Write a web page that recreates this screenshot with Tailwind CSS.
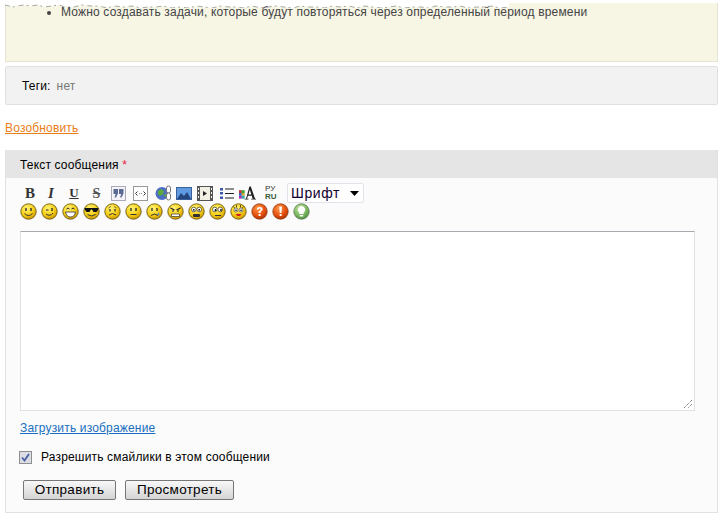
<!DOCTYPE html>
<html><head><meta charset="utf-8">
<script src="https://cdn.jsdelivr.net/npm/@tailwindcss/browser@4"></script>
</head>
<body class="bg-white font-['Liberation_Sans',Arial,sans-serif] text-[12px] tracking-[.17px] text-black w-[723px] h-[518px] overflow-hidden relative">
<svg width="0" height="0" class="absolute">
<defs>
<radialGradient id="y" cx="40%" cy="30%" r="75%"><stop offset="0" stop-color="#fff27a"/><stop offset=".55" stop-color="#f7d21a"/><stop offset="1" stop-color="#c98f00"/></radialGradient>
<radialGradient id="r" cx="40%" cy="30%" r="75%"><stop offset="0" stop-color="#ff9a4a"/><stop offset=".6" stop-color="#e8500f"/><stop offset="1" stop-color="#a83000"/></radialGradient>
<radialGradient id="g" cx="40%" cy="30%" r="75%"><stop offset="0" stop-color="#c4e6a8"/><stop offset=".6" stop-color="#7cb862"/><stop offset="1" stop-color="#4c8a3c"/></radialGradient>
<symbol id="f" viewBox="0 0 17 17"><circle cx="8.500" cy="8.500" r="7.700" fill="url(#y)" stroke="#6b5a10" stroke-width=".9"/></symbol>
</defs>
</svg>

<div class="h-[3px]"></div>
<section class="relative mx-[5px] w-[713px] h-[59px] bg-[#f7f5e4] border border-[#e6e4d2] border-t-0">
<svg class="absolute left-[-1px] top-0" width="715" height="5" viewBox="0 0 715 5"><path d="M0 0V2l8 2 10-2 8 1 7-1 6 2 8-1 7-1 6 2 9 0 8-2 9 1 8 0 8 2 7-2 10 1 8-1 9 2 7-1 8 0 7-1 9 2 8-1 8 1 9-2 7 1 8 1 8-2 9 1 7 0 8 1 8-2 9 2 7-1 8-1 8 1 9 1 7-2 8 1 9 0 8 1 7-2 8 1 9-1 8 2 7-2 8 1 9 1 8-1 7-1 8 2 9-1 8 0 7 1 8-2 9 1 8 0 7-1 8 2 9-1 8 0 7-1 8 2 9-1V0z" fill="#fff"/><path d="M0 2l8 2 10-2 8 1 7-1 6 2 8-1 7-1 6 2 9 0 8-2 9 1 8 0 8 2 7-2 10 1 8-1 9 2 7-1 8 0 7-1 9 2 8-1 8 1 9-2 7 1 8 1 8-2 9 1 7 0 8 1 8-2 9 2 7-1 8-1 8 1 9 1 7-2 8 1 9 0 8 1 7-2 8 1 9-1 8 2 7-2 8 1 9 1 8-1 7-1 8 2 9-1 8 0 7 1 8-2 9 1 8 0 7-1 8 2 9-1 8 0 7-1 8 2 9-1" fill="none" stroke="#a8a8a4" stroke-width="1" stroke-dasharray="5 3 2 4"/></svg>
<ul class="relative pl-[55px] pt-[2px] list-disc text-[#444444] leading-[14px] marker:text-[#444]"><li>Можно создавать задачи, которые будут повторяться через определенный период времени</li></ul>
</section>

<section class="mx-[5px] mt-[4px] w-[713px] h-[39px] bg-[#f2f2f2] border border-[#e0e0e0] rounded-[2px] flex items-center pl-[16px] gap-[6px]">
<span class="text-black">Теги:</span><span class="text-[#777777]">нет</span>
</section>

<div class="mx-[5px] mt-[16px] leading-[14px]"><a href="#" class="underline text-[#e87e17]">Возобновить</a></div>

<section class="mx-[5px] mt-[15px] w-[713px] h-[363px] bg-[#fbfbfb] border-x border-b border-[#e2e2e2]">
<header class="h-[28px] bg-[#e5e5e5] flex items-center pl-[14px] pt-[1px]">Текст сообщения&nbsp;<span class="text-[#e8193c]">*</span></header>

<div class="pl-[14px] pt-[5px] h-[25px] flex items-start tracking-normal">
<div class="flex h-[20px] items-center">
<span class="w-[20px] text-center font-['Liberation_Serif',serif] font-bold text-[15px] text-[#333]">B</span>
<span class="w-[22px] text-center font-['Liberation_Serif',serif] font-bold italic text-[15px] text-[#333]">I</span>
<span class="w-[24px] text-center font-['Liberation_Serif',serif] font-bold text-[13px] underline text-[#333]">U</span>
<span class="w-[21px] text-center font-['Liberation_Serif',serif] font-bold text-[14px] line-through text-[#555]">S</span>
<svg class="ml-[4px]" width="15" height="15" viewBox="0 0 15 15"><rect x=".5" y=".5" width="14" height="14" fill="#f4f4f8" stroke="#aab"/><path d="M2.500 3h4.500v4.500l-2 4H3.500l1.200-3.500H2.500zM8 3h4.500v4.500l-2 4H9l1.200-3.500H8z" fill="#5a6a94"/></svg>
<svg class="ml-[7px]" width="15" height="15" viewBox="0 0 15 15"><rect x=".5" y=".5" width="14" height="14" fill="#fff" stroke="#999"/><path d="M4.500 5.500L2.500 7.500l2 2M10.500 5.500l2 2-2 2" fill="none" stroke="#333"/><path d="M6.500 7.500h.6M8 7.500h.6" stroke="#333"/></svg>
<svg class="ml-[7px]" width="17" height="16" viewBox="0 0 17 16"><circle cx="7" cy="8.500" r="6.500" fill="#4c6fc4"/><path d="M3 6l3-2 3 2-1 3-3 2-2-2zM8 10l3-1v3z" fill="#5aaa3c"/><rect x="11.500" y="1" width="4" height="7" rx="2" fill="#fff" stroke="#777"/><rect x="11.500" y="8" width="4" height="7" rx="2" fill="#fff" stroke="#777"/></svg>
<svg class="ml-[4px]" width="16" height="13" viewBox="0 0 16 13"><rect x=".5" y=".5" width="15" height="12" fill="#5f9ae0" stroke="#3a5f9a"/><path d="M1 12l4-6 3 3 3-4 4 7z" fill="#24457e"/></svg>
<svg class="ml-[5px]" width="16" height="15" viewBox="0 0 16 15"><rect width="16" height="15" fill="#555"/><rect x="3" y="1" width="10" height="13" fill="#f2f0e4"/><path d="M6 5l4 2.500-4 2.500z" fill="#222"/><path d="M1 2h1v2H1zM1 6h1v2H1zM1 10h1v2H1zM14 2h1v2h-1zM14 6h1v2h-1zM14 10h1v2h-1z" fill="#eee"/></svg>
<svg class="ml-[7px]" width="14" height="13" viewBox="0 0 14 13"><path d="M0 1h3v2.500H0zM0 5h3v2.500H0zM0 9.500h3V12H0z" fill="#3c5aa8"/><path d="M5 2h9M5 6.500h9M5 11h9" stroke="#222" stroke-width="1.200"/></svg>
<svg class="ml-[5px]" width="17" height="14" viewBox="0 0 18 14"><path d="M0 4h3v3H0z" fill="#c33"/><path d="M3 4h3v3H3z" fill="#3a3"/><path d="M0 7h3v3H0z" fill="#36c"/><path d="M3 7h3v3H3z" fill="#ca3"/><path d="M0 10h3v3H0z" fill="#a3a"/><path d="M3 10h3v3H3z" fill="#3aa"/><path d="M11 0h1.500l4.500 13h1v1h-5v-1h1.500l-1-3H9.500l-1 3H10v1H6v-1h1.500zM10 8.500h3l-1.500-5z" fill="#222"/></svg>
<span class="ml-[9px] w-[14px] flex flex-col text-[8px] leading-[8px] text-[#333]"><span class="whitespace-nowrap">РУ</span><span class="font-bold text-[#375e38]">RU</span></span>
</div>
<div class="ml-[8px] w-[77px] h-[20px] bg-white border border-[#e2e3ea] rounded-[2px] flex items-center justify-between pl-[3px] pr-[4px] text-[14px] tracking-[.6px] text-[#100030]">Шрифт<svg width="9" height="5" viewBox="0 0 9 5"><path d="M0 0h9L4.500 5z" fill="#000"/></svg></div>
</div>

<div class="pl-[14px] flex gap-[4px] h-[18px]">
<svg width="17" height="17" viewBox="0 0 17 17"><use href="#f"/><path d="M4.500 10.500q4 4 8 0" fill="none" stroke="#333"/><path d="M6 5v3M11 5v3" stroke="#222" stroke-width="1.300"/></svg>
<svg width="17" height="17" viewBox="0 0 17 17"><use href="#f"/><path d="M5 11q4 3 7-1" fill="none" stroke="#333"/><path d="M5 7h2.500" stroke="#222"/><path d="M11 5v3" stroke="#222" stroke-width="1.300"/></svg>
<svg width="17" height="17" viewBox="0 0 17 17"><use href="#f"/><path d="M3.500 9h10q-1 5-5 5t-5-5z" fill="#fff" stroke="#333" stroke-width=".8"/><path d="M4.500 6q1.500-2 3 0M9.500 6q1.500-2 3 0" fill="none" stroke="#222"/></svg>
<svg width="17" height="17" viewBox="0 0 17 17"><use href="#f"/><path d="M1.500 5h14l-.5 2-1.500 2h-3L9 6.500H8L6.500 9h-3L2 7z" fill="#111"/><path d="M4.500 11.500q4 3 8 0" fill="none" stroke="#333"/></svg>
<svg width="17" height="17" viewBox="0 0 17 17"><use href="#f"/><path d="M5 12q3.500-3 7 0" fill="none" stroke="#333"/><path d="M6 6v2.500M11 6v2.500" stroke="#222" stroke-width="1.200"/><path d="M4.500 5l2.500-1.500M12.500 5L10 3.500" stroke="#444" stroke-width=".7"/></svg>
<svg width="17" height="17" viewBox="0 0 17 17"><use href="#f"/><path d="M5.500 11.500h6" stroke="#333"/><path d="M6 5v3M11 5v3" stroke="#222" stroke-width="1.300"/></svg>
<svg width="17" height="17" viewBox="0 0 17 17"><use href="#f"/><path d="M5 12.500q3.500-3 7 0" fill="none" stroke="#333"/><path d="M6 5v3M11 5v3" stroke="#222" stroke-width="1.200"/><path d="M12.500 9l1 2.500-1 1-1-1z" fill="#4a8ee0"/></svg>
<svg width="17" height="17" viewBox="0 0 17 17"><use href="#f"/><path d="M3.500 5l4 2M13.500 5l-4 2" stroke="#222" stroke-width="1.200"/><path d="M5 8h2M10 8h2" stroke="#222"/><path d="M4.500 11h8v2.500h-8z" fill="#fff" stroke="#333" stroke-width=".7"/></svg>
<svg width="17" height="17" viewBox="0 0 17 17"><use href="#f"/><circle cx="5.800" cy="6.500" r="2.300" fill="#fff" stroke="#333" stroke-width=".7"/><circle cx="11.200" cy="6.500" r="2.300" fill="#fff" stroke="#333" stroke-width=".7"/><circle cx="5.800" cy="6.800" r=".9"/><circle cx="11.200" cy="6.800" r=".9"/><rect x="5" y="11" width="7" height="3" rx="1" fill="#333"/></svg>
<svg width="17" height="17" viewBox="0 0 17 17"><use href="#f"/><circle cx="5.800" cy="6.500" r="2.300" fill="#fff" stroke="#333" stroke-width=".7"/><circle cx="11.200" cy="6.500" r="2.300" fill="#fff" stroke="#333" stroke-width=".7"/><circle cx="6.500" cy="7" r=".9"/><circle cx="12" cy="7" r=".9"/><path d="M6 12.500h6" stroke="#333"/></svg>
<svg width="17" height="17" viewBox="0 0 17 17"><use href="#f"/><path d="M3.500 3.500l1.500 2M6.500 2v2.500M10.500 2v2.500M13.500 3.500L12 5.500" stroke="#6b4a10"/><circle cx="6" cy="7" r="2" fill="#fff" stroke="#333" stroke-width=".6"/><circle cx="11" cy="7" r="2" fill="#fff" stroke="#333" stroke-width=".6"/><circle cx="6" cy="7.300" r=".8"/><circle cx="11" cy="7.300" r=".8"/><path d="M5.500 11.500q3 -1.500 6 0q-3 3-6 0z" fill="#d01818"/></svg>
<svg width="17" height="17" viewBox="0 0 17 17"><circle cx="8.500" cy="8.500" r="7.700" fill="url(#r)" stroke="#8c3a10" stroke-width=".8"/><path d="M5.800 6.500q0-2.500 2.800-2.500 3 0 3 2.300 0 1.500-2 2.400v1.300H7.600V8.200q2-.7 2-1.800 0-.8-1-.8-.9 0-1 1z" fill="#fff"/><rect x="7.600" y="11" width="2" height="2" fill="#fff"/></svg>
<svg width="17" height="17" viewBox="0 0 17 17"><circle cx="8.500" cy="8.500" r="7.700" fill="url(#r)" stroke="#8c3a10" stroke-width=".8"/><path d="M7.200 3.500h2.800l-.5 6.500H7.700z" fill="#fff"/><rect x="7.600" y="11" width="2" height="2" fill="#fff"/></svg>
<svg width="17" height="17" viewBox="0 0 17 17"><circle cx="8.500" cy="8.500" r="7.700" fill="url(#g)" stroke="#5a7a54" stroke-width=".8"/><path d="M8.500 3a3.700 3.700 0 0 1 2.200 6.600V11H6.300V9.600A3.700 3.700 0 0 1 8.500 3zM6.800 12h3.400v1.500H6.800z" fill="#fff"/></svg>
</div>

<div class="relative mt-[10px] ml-[14px] w-[675px] h-[180px] bg-white border border-[#dfe3e8] border-t-[#a9a9b0]">
<svg class="absolute right-[1px] bottom-[1px]" width="9" height="9" viewBox="0 0 9 9"><path d="M8 0L0 8M8 4L4 8" stroke="#555" stroke-dasharray="1 1"/></svg>
</div>

<div class="mt-[10px] ml-[14px] leading-[14px]"><a href="#" class="underline text-[#1a6fbd]">Загрузить изображение</a></div>

<label class="mt-[15px] ml-[13px] flex items-center h-[14px]">
<span class="w-[13px] h-[13px] border border-[#8e8f8f] bg-[#dcdce4] flex items-center justify-center"><svg width="9" height="9" viewBox="0 0 9 9"><path d="M1 4.500l2.500 3L8 1" fill="none" stroke="#4a5fa5" stroke-width="1.800"/></svg></span>
<span class="ml-[9px]">Разрешить смайлики в этом сообщении</span>
</label>

<div class="mt-[16px] ml-[17px] flex gap-[9px]">
<button class="w-[93px] h-[20px] rounded-[2px] border border-[#777777] bg-linear-to-b from-[#f8f8f8] to-[#d4d4d4] text-[13.500px] leading-[18px] tracking-[.3px]">Отправить</button>
<button class="w-[109px] h-[20px] rounded-[2px] border border-[#777777] bg-linear-to-b from-[#f8f8f8] to-[#d4d4d4] text-[13.500px] leading-[18px] tracking-[.3px]">Просмотреть</button>
</div>
</section>
</body></html>
